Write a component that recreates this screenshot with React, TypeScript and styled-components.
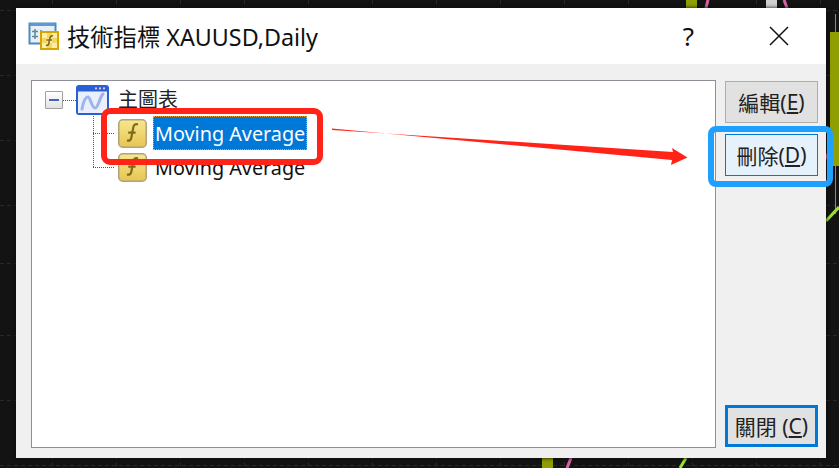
import React from "react";
import styled, { createGlobalStyle } from "styled-components";

const UI_FONT = `"Noto Sans", "Noto Sans CJK TC", "Liberation Sans", sans-serif`;

const GlobalStyle = createGlobalStyle`
  html, body {
    margin: 0;
    padding: 0;
    background: #131313;
  }
`;

const Page = styled.div`
  position: relative;
  width: 839px;
  height: 468px;
  overflow: hidden;
  padding: 8px 0 0 16px;
  box-sizing: border-box;
  background: #131313;
  font-family: ${UI_FONT};
`;

const ChartLayer = styled.svg`
  position: absolute;
  left: 0;
  top: 0;
`;

const Dialog = styled.div`
  position: relative;
  display: flex;
  flex-direction: column;
  width: 810px;
  height: 450px;
  background: #f0f0f0;
  box-shadow: 0 0 4px #0a0a0a;
`;

const TitleBar = styled.div`
  display: flex;
  align-items: center;
  height: 56px;
  padding: 0 37px 0 12px;
  box-sizing: border-box;
  background: #fff;
`;

const Title = styled.div`
  flex: 1;
  margin-left: 7px;
  font-size: 23.3px;
  color: #111;
  white-space: nowrap;
`;

const HelpMark = styled.div`
  margin-right: 75px;
  font-size: 26px;
  color: #111;
`;

const Body = styled.div`
  display: flex;
  flex: 1;
  padding: 16px 8px 10px 15px;
`;

const TreePanel = styled.div`
  width: 685px;
  padding: 3px 0 0 13px;
  box-sizing: border-box;
  background: #fff;
  border: 1px solid #8f8f98;
`;

const RootRow = styled.div`
  display: flex;
  align-items: center;
  height: 32px;
`;

const Toggle = styled.div`
  display: flex;
  align-items: center;
  justify-content: center;
  width: 16px;
  height: 16px;
  border: 1px solid #a0a0a0;
  border-radius: 1px;
  background: linear-gradient(#fff, #e2e2e2);
  &::before {
    content: "";
    width: 10px;
    height: 2px;
    background: #4763b4;
  }
`;

const DotsH = styled.div`
  width: 13px;
  height: 1px;
  background: repeating-linear-gradient(90deg, #555 0 1px, transparent 1px 2px);
`;

const NodeLabel = styled.span`
  margin-left: 9px;
  font-size: 20px;
  line-height: 24px;
  color: #222;
`;

const ChildRow = styled.div`
  display: flex;
  align-items: center;
  height: 34px;
  padding-left: 48px;
`;

const Elbow = styled.div<{ $last?: boolean }>`
  width: 25px;
  height: 34px;
  flex: none;
  background:
    repeating-linear-gradient(180deg, #555 0 1px, transparent 1px 2px) left top / 1px ${(p) => (p.$last ? "50%" : "100%")} no-repeat,
    repeating-linear-gradient(90deg, #555 0 1px, transparent 1px 2px) left center / 21px 1px no-repeat;
`;

const ItemLabel = styled.span<{ $selected?: boolean }>`
  display: flex;
  align-items: center;
  height: 34px;
  margin-left: 6px;
  padding: 0 2px 0 2px;
  font-size: 19.8px;
  white-space: nowrap;
  color: ${(p) => (p.$selected ? "#fff" : "#111")};
  background: ${(p) => (p.$selected ? "#0078d7" : "transparent")};
  outline: ${(p) => (p.$selected ? "1px dotted #f0a030" : "none")};
  outline-offset: -1px;
`;

const Sidebar = styled.div`
  display: flex;
  flex-direction: column;
  width: 93px;
  margin-left: 9px;
  padding-top: 1px;
`;

const ActionButton = styled.div<{ $variant?: "plain" | "hover" | "focus"; $pushDown?: boolean }>`
  display: flex;
  align-items: center;
  justify-content: center;
  width: 93px;
  height: 42px;
  box-sizing: border-box;
  margin-bottom: 11px;
  margin-top: ${(p) => (p.$pushDown ? "auto" : "0")};
  font-size: 21px;
  color: #222;
  white-space: nowrap;
  background: ${(p) => (p.$variant === "hover" ? "#e5f1fb" : "#e1e1e1")};
  border: ${(p) =>
    p.$variant === "focus" ? "3px solid #0078d7" : p.$variant === "hover" ? "1px solid #0078d7" : "1px solid #adadad"};
  ${(p) => (p.$pushDown ? "margin-bottom: 1px;" : "")}
  u {
    text-underline-offset: 2px;
  }
`;

const Mark = styled.div<{ $color: string; $radius: number }>`
  position: absolute;
  box-sizing: border-box;
  border: 6px solid ${(p) => p.$color};
  border-radius: ${(p) => p.$radius}px;
`;

const RedMark = styled(Mark)`
  left: 85px;
  top: 100px;
  width: 222px;
  height: 57px;
`;

const BlueMark = styled(Mark)`
  left: 692px;
  top: 118px;
  width: 125px;
  height: 61px;
`;

const ArrowLayer = styled.svg`
  position: absolute;
  left: 0;
  top: 0;
  pointer-events: none;
`;

function ChartBackdrop() {
  const rows = [10, 75, 140, 205, 263, 335, 400, 465];
  const cols = Array.from({ length: 13 }, (_, i) => 52 + i * 64);
  return (
    <ChartLayer width="839" height="468">
      {rows.map((y) => (
        <line key={y} x1="0" x2="839" y1={y + 0.5} y2={y + 0.5} stroke="#282828" strokeDasharray="4 3" />
      ))}
      {cols.map((x) => (
        <line key={x} x1={x + 0.5} x2={x + 0.5} y1="0" y2="468" stroke="#282828" strokeDasharray="4 3" />
      ))}
      <rect x="686" y="0" width="11" height="8" fill="#8f9e00" />
      <rect x="766" y="0" width="11" height="8" fill="#cfcfcf" />
      <rect x="542" y="458" width="11" height="10" fill="#8f9e00" />
      <rect x="835" y="14" width="1" height="200" fill="#8f9e00" />
      <rect x="830" y="32" width="9" height="134" fill="#8f9e00" />
      <path d="M708 0 L706 8" stroke="#e060a8" strokeWidth="3" fill="none" />
      <path d="M784 0 L787 8" stroke="#e060a8" strokeWidth="3" fill="none" />
      <path d="M571 458 L567 468" stroke="#e060a8" strokeWidth="3" fill="none" />
      <path d="M826 154 L831 166" stroke="#e060a8" strokeWidth="3" fill="none" />
      <path d="M686 458 L680 468" stroke="#9be030" strokeWidth="3" fill="none" />
      <path d="M826 221 L839 207" stroke="#9be030" strokeWidth="3" fill="none" />
    </ChartLayer>
  );
}

function DialogIcon() {
  return (
    <svg width="32" height="32" viewBox="0 0 32 32" style={{ flex: "none" }}>
      <rect x="1.5" y="3.5" width="26" height="20" fill="#e8f0f6" stroke="#4c8cbc" strokeWidth="2" />
      <rect x="2" y="3" width="25" height="3" fill="#5b9ad8" />
      <path d="M7 9v10M4 11.5h6M4 16.5h6M13 10v4" stroke="#5f8ca0" strokeWidth="1.6" fill="none" />
      <rect x="13" y="12" width="17" height="17" fill="#f3d860" stroke="#d8a400" strokeWidth="2" />
      <path d="M14 13h5v5h-5zM24 13h5v5h-5zM19 18h5v5h-5zM14 23h5v5h-5zM24 23h5v5h-5z" fill="#fbeeb0" />
      <path d="M25 16c-2-.6-2.8.6-3.2 2.6l-1 5c-.3 1.5-1 2-2.8 1.6M18.5 20h5.5" stroke="#85691a" strokeWidth="1.7" fill="none" />
    </svg>
  );
}

function ChartIcon() {
  return (
    <svg width="33" height="30" viewBox="0 0 33 30" style={{ flex: "none" }}>
      <rect x="0" y="0" width="33" height="30" rx="3" fill="#2a60d4" />
      <rect x="2" y="6.5" width="29" height="21.5" fill="#e9effb" />
      <circle cx="20" cy="3.4" r="1.1" fill="#d8c8e8" />
      <circle cx="24" cy="3.4" r="1.1" fill="#d8c8e8" />
      <circle cx="28" cy="3.4" r="1.1" fill="#d8c8e8" />
      <path d="M6 24c1.5-8 3.5-12 6-12s3.5 11 7 11 4.5-11 8-14" stroke="#9fb4ea" strokeWidth="3" fill="none" strokeLinecap="round" />
    </svg>
  );
}

function FunctionIcon() {
  return (
    <svg width="29" height="29" viewBox="0 0 29 29" style={{ flex: "none" }}>
      <defs>
        <linearGradient id="gold" x1="0" y1="0" x2="0" y2="1">
          <stop offset="0" stopColor="#f8e78e" />
          <stop offset="1" stopColor="#e6c553" />
        </linearGradient>
      </defs>
      <rect x="0.75" y="0.75" width="27.5" height="27.5" rx="4" fill="url(#gold)" stroke="#b0a27a" strokeWidth="1.5" />
      <path d="M20 5.5c-2.8-.9-4.2.3-4.7 2.9l-2 10.4c-.5 2.4-1.8 3.4-4.3 2.6M10.2 13.6h7.4" stroke="#7d6a1c" strokeWidth="2.2" fill="none" />
    </svg>
  );
}

function CloseIcon() {
  return (
    <svg width="20" height="20" viewBox="0 0 20 20" style={{ flex: "none" }}>
      <path d="M1 1 L19 19 M19 1 L1 19" stroke="#111" strokeWidth="1.5" />
    </svg>
  );
}

function App() {
  return (
    <Page>
      <GlobalStyle />
      <ChartBackdrop />
      <Dialog>
        <TitleBar>
          <DialogIcon />
          <Title>技術指標 XAUUSD,Daily</Title>
          <HelpMark>?</HelpMark>
          <CloseIcon />
        </TitleBar>
        <Body>
          <TreePanel>
            <RootRow>
              <Toggle />
              <DotsH />
              <ChartIcon />
              <NodeLabel>主圖表</NodeLabel>
            </RootRow>
            <ChildRow>
              <Elbow />
              <FunctionIcon />
              <ItemLabel $selected>Moving Average</ItemLabel>
            </ChildRow>
            <ChildRow>
              <Elbow $last />
              <FunctionIcon />
              <ItemLabel>Moving Average</ItemLabel>
            </ChildRow>
          </TreePanel>
          <Sidebar>
            <ActionButton>
              編輯(<u>E</u>)
            </ActionButton>
            <ActionButton $variant="hover">
              刪除(<u>D</u>)
            </ActionButton>
            <ActionButton $variant="focus" $pushDown>
              關閉 (<u>C</u>)
            </ActionButton>
          </Sidebar>
        </Body>
        <RedMark $color="#ff2318" $radius={9} />
        <BlueMark $color="#1ea0ff" $radius={8} />
      </Dialog>
      <ArrowLayer width="839" height="468">
        <path d="M332 128.5 L332 130 L673 152 L672 148 L687.5 157.5 L671 165 L672 160 Z" fill="#ff2318" />
      </ArrowLayer>
    </Page>
  );
}

export default App;
